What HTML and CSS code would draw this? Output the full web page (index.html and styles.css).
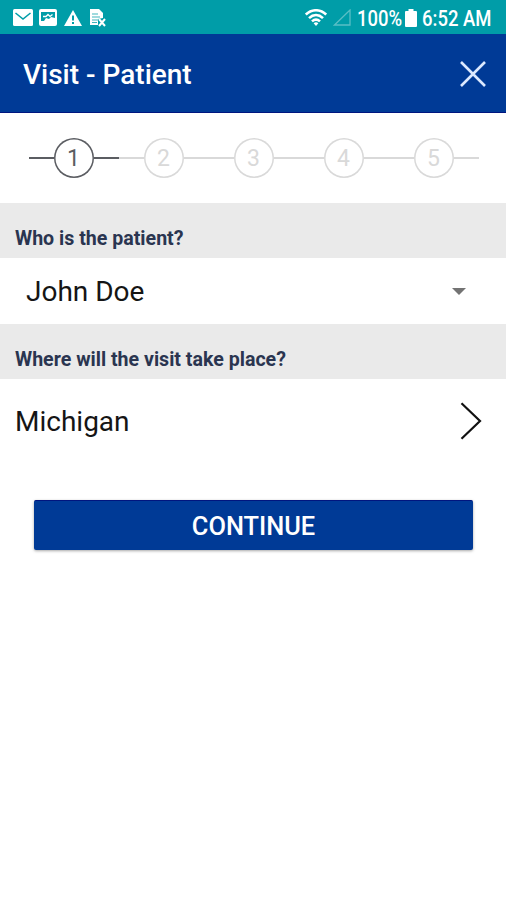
FILE: index.html
```
<!DOCTYPE html>
<html lang="en">
<head>
<meta charset="utf-8">
<title>Visit - Patient</title>
<link rel="stylesheet" href="styles.css">
</head>
<body>
<div class="status">
  <svg class="mail" width="20" height="17" viewBox="0 0 20 17"><rect width="20" height="17" rx="1.5" fill="#fff"/><path d="M2.500 4 10 10l7.500-6" fill="none" stroke="#009da8" stroke-width="1.600"/></svg>
  <svg class="photo" width="18" height="17" viewBox="0 0 18 17"><rect width="18" height="17" rx="2" fill="#fff"/><path d="M2 3h14v6l-4-1-2 2-3-1-2 3H2z" fill="#009da8"/><path d="M4 7.500h3l2-2 2 2 2.500-2" fill="none" stroke="#fff" stroke-width="1.300"/></svg>
  <svg class="alert" width="18" height="16" viewBox="0 0 18 16"><path d="M9 0 18 16H0z" fill="#fff"/><path d="M9 5.500v5M9 12v2" stroke="#009da8" stroke-width="2"/></svg>
  <svg class="doc" width="17" height="18" viewBox="0 0 17 18"><path d="M0 0h9l4 4v5l-5 1v6H0z" fill="#fff"/><path d="M2 5h6M2 8h8M2 11h6M2 13.500h5" stroke="#009da8" stroke-width="1" opacity=".75"/><path d="m9 10 6 7m0-7-6 7" stroke="#fff" stroke-width="2"/></svg>
  <span class="gap"></span>
  <svg class="wifi" width="22" height="17" viewBox="0 0 22 17"><g fill="none" stroke="#fff" stroke-width="2.600"><path d="M.8 5.600C7-.2 15-.2 21.200 5.600"/><path d="M4 9.100c4.300-4 9.700-4 14 0"/><path d="M7 12.400c2.500-2.300 5.500-2.300 8 0"/></g><path d="M8.600 14.200q2.400-1.700 4.800 0L11 17z" fill="#fff"/></svg>
  <svg class="signal" width="18" height="17" viewBox="0 0 18 17"><path d="M1.500 16H17V1z" fill="none" stroke="#59bec5" stroke-width="1.300"/></svg>
  <span class="percent"><span class="narrow">100%</span></span>
  <svg class="battery" width="12" height="18" viewBox="0 0 12 18"><path d="M3.500 0h5v2H11q1 0 1 1v14q0 1-1 1H1q-1 0-1-1V3q0-1 1-1h2.500z" fill="#fff"/></svg>
  <span class="clock"><span class="narrow">6:52 AM</span></span>
</div>
<header class="bar">
  <h1>Visit - Patient</h1>
  <svg width="26" height="26" viewBox="0 0 26 26"><path d="m1 1 24 24M25 1 1 25" stroke="#dce9ff" stroke-width="2.600"/></svg>
</header>
<ol class="steps">
  <li class="active"><span>1</span></li>
  <li><span>2</span></li>
  <li><span>3</span></li>
  <li><span>4</span></li>
  <li><span>5</span></li>
</ol>
<h2 class="label first">Who is the patient?</h2>
<div class="row patient">
  <span class="name">John Doe</span>
  <svg width="14" height="7" viewBox="0 0 14 7"><path d="M0 0h14L7 7z" fill="#737373"/></svg>
</div>
<h2 class="label">Where will the visit take place?</h2>
<div class="row place">
  <span class="state">Michigan</span>
  <svg width="22" height="38" viewBox="0 0 22 38"><path d="m1.500 1.300 18.500 17.700L1.500 36.700" fill="none" stroke="#111" stroke-width="2.200"/></svg>
</div>
<button class="continue"><span>CONTINUE</span></button>
</body>
</html>
```
FILE: styles.css
```
* { box-sizing: border-box; }
body { margin: 0; height: 900px; background: #fff; font-family: Roboto, sans-serif; overflow: hidden; }
svg { display: block; flex: none; }
.status { height: 34px; background: #009da8; display: flex; align-items: center; padding: 1px 0 0 13px; color: #fff; }
.photo { margin-left: 6px; }
.alert { margin-left: 7px; }
.doc { margin-left: 8px; }
.gap { width: 198px; }
.signal { margin-left: 6px; }
.percent { width: 45px; margin-left: 6px; }
.battery { margin-left: 3px; }
.clock { width: 72px; margin-left: 5px; }
.narrow { display: block; width: max-content; font-size: 22px; font-weight: 500; line-height: 32px; transform: scaleX(.84); transform-origin: left; padding-top: 2px; }
.bar { height: 79px; background: #003a96; border-bottom: 1px solid #00157f; display: flex; align-items: center; justify-content: space-between; padding: 2px 20px 0 23px; color: #fff; }
h1 { margin: 2px 0 0; font-size: 28px; font-weight: 500; line-height: 32px; }
.steps { list-style: none; margin: 0; height: 90px; padding: 0 27.500px 0 28.500px; display: flex; align-items: center; }
.steps li { flex: 1; display: flex; align-items: center; color: #d9d9d9; }
.steps li::before, .steps li::after { content: ""; flex: 1; height: 2px; background: currentColor; }
.steps span { width: 40px; height: 40px; border-radius: 50%; box-shadow: inset 0 0 0 1.500px currentColor; text-align: center; font-size: 23px; line-height: 42px; }
.steps .active { color: #5b5d62; }
.label { margin: 0; height: 55px; padding: 22px 0 0 15px; background: #eaeaea; color: #2a3550; font-size: 19.600px; font-weight: 700; line-height: 28px; }
.row { display: flex; align-items: center; justify-content: space-between; color: #151515; font-size: 28px; line-height: 36px; }
.patient { height: 66px; padding: 0 40px 0 26px; }
.name { padding-top: 2px; }
.place { height: 85px; padding: 0 24px 2px 15px; }
.state { padding-top: 3px; }
.continue { display: block; width: 439px; height: 50px; margin: 36px 0 0 34px; padding: 0; border: 0; border-top: 1px solid #00157f; border-radius: 2px; background: #003a96; box-shadow: 0 1px 3px rgba(0,0,0,.35); color: #fff; font: 500 25.400px/32px Roboto, sans-serif; }
```
